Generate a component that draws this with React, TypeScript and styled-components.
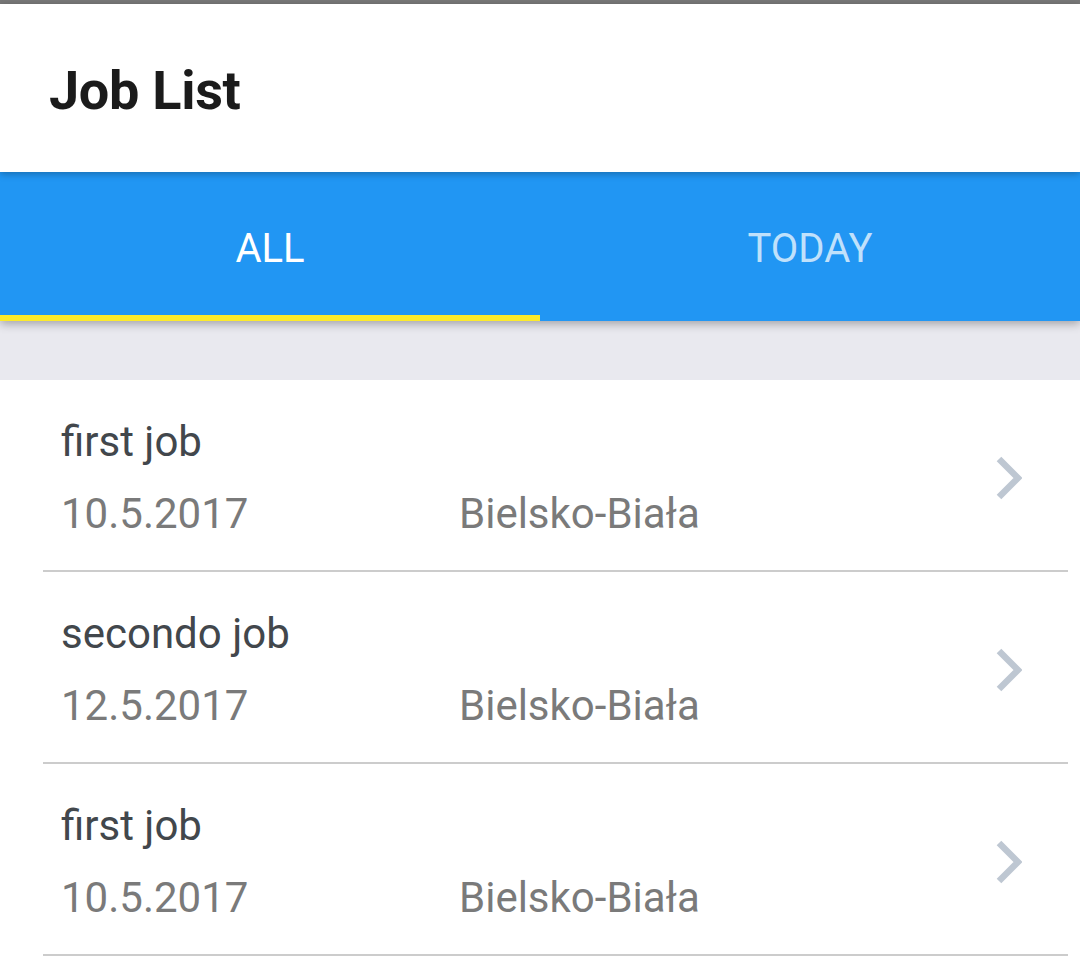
import React, { useState } from "react";
import styled, { createGlobalStyle } from "styled-components";

const GlobalStyle = createGlobalStyle`
  html, body { margin: 0; padding: 0; background: #ffffff; }
  body { font-family: Roboto, "Noto Sans", Arial, sans-serif; -webkit-font-smoothing: antialiased; }
  * { box-sizing: border-box; }
`;

const Screen = styled.div`
  width: 1080px;
  height: 975px;
  overflow: hidden;
  background: #ffffff;
  display: flex;
  flex-direction: column;
`;

const StatusEdge = styled.div`
  height: 4px;
  background: #787878;
  flex: none;
`;

const Header = styled.header`
  position: relative;
  z-index: 2;
  background: #ffffff;
  height: 168px;
  padding: 54px 0 0 49px;
  box-shadow: 0 2px 7px rgba(0, 0, 0, 0.28);
  flex: none;
`;

const Title = styled.h1`
  margin: 0;
  font-family: Roboto, sans-serif;
  font-weight: 700;
  font-size: 54px;
  line-height: 66px;
  color: #1b1b1b;
  letter-spacing: -0.3px;
`;

const TabBar = styled.nav`
  position: relative;
  z-index: 1;
  height: 149px;
  background: #2196f3;
  display: flex;
  box-shadow: 0 3px 9px rgba(0, 0, 0, 0.3);
  flex: none;
`;

const Tab = styled.button<{ $active: boolean }>`
  flex: 1;
  border: none;
  margin: 0;
  background: transparent;
  padding: 10px 0 0 0;
  display: flex;
  align-items: center;
  justify-content: center;
  font-family: Roboto, sans-serif;
  font-size: 40px;
  line-height: 50px;
  font-weight: 400;
  color: ${(p) => (p.$active ? "#ffffff" : "rgba(255,255,255,0.72)")};
  border-bottom: 6px solid ${(p) => (p.$active ? "#fcea2b" : "transparent")};
  cursor: pointer;
`;

const Spacer = styled.div`
  height: 59px;
  background: #e9e9ef;
  flex: none;
`;

const List = styled.ul`
  list-style: none;
  margin: 0;
  padding: 0;
`;

const Row = styled.li`
  margin: 0 12px 0 43px;
  padding: 37px 46px 31px 18px;
  border-bottom: 2px solid #cccccc;
  display: flex;
  align-items: center;
  justify-content: space-between;
`;

const Info = styled.div`
  display: flex;
  flex-direction: column;
  gap: 22px;
`;

const JobName = styled.div`
  font-family: Roboto, sans-serif;
  font-size: 42px;
  line-height: 50px;
  color: #42474c;
`;

const Meta = styled.div`
  display: grid;
  grid-template-columns: 398px auto;
  font-family: Roboto, sans-serif;
  font-size: 42px;
  line-height: 50px;
  color: #7a7a7a;
`;

const Chevron = () => (
  <svg width="27" height="44" viewBox="0 0 27 44" aria-hidden="true">
    <polyline
      points="4,3 23,22 4,41"
      fill="none"
      stroke="#bec7d2"
      strokeWidth="6.5"
      strokeLinejoin="miter"
    />
  </svg>
);

const jobs = [
  { name: "first job", date: "10.5.2017", city: "Bielsko-Biała" },
  { name: "secondo job", date: "12.5.2017", city: "Bielsko-Biała" },
  { name: "first job", date: "10.5.2017", city: "Bielsko-Biała" },
];

export default function App() {
  const [tab, setTab] = useState(0);
  return (
    <>
      <GlobalStyle />
      <Screen>
        <StatusEdge />
        <Header>
          <Title>Job List</Title>
        </Header>
        <TabBar>
          <Tab $active={tab === 0} onClick={() => setTab(0)}>ALL</Tab>
          <Tab $active={tab === 1} onClick={() => setTab(1)}>TODAY</Tab>
        </TabBar>
        <Spacer />
        <List>
          {jobs.map((j, i) => (
            <Row key={i}>
              <Info>
                <JobName>{j.name}</JobName>
                <Meta>
                  <span>{j.date}</span>
                  <span>{j.city}</span>
                </Meta>
              </Info>
              <Chevron />
            </Row>
          ))}
        </List>
      </Screen>
    </>
  );
}
